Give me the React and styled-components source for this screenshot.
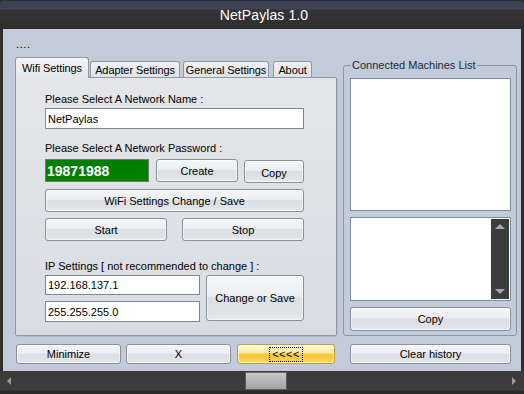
import React from 'react';
import styled, { createGlobalStyle, css } from 'styled-components';

const UI = `"Liberation Sans", Arial, sans-serif`;

const Global = createGlobalStyle`
  html, body { margin: 0; padding: 0; background: #2b2b2b; }
  body { width: 524px; height: 394px; overflow: hidden; }
  *, *::before, *::after { box-sizing: border-box; }
`;

const Window = styled.div`
  width: 524px;
  height: 394px;
  display: flex;
  flex-direction: column;
  background: #2e2e2e;
  font-family: ${UI};
  font-size: 11px;
  color: #000;
`;

const TitleBar = styled.div`
  flex: none;
  height: 29px;
  border-radius: 5px 5px 0 0;
  background: linear-gradient(#23252b 0px, #3c4150 1px, #3f4455 9px, #343434 10px, #2f2f2f 28px, #2a2a2a 29px);
  display: flex;
  align-items: center;
  justify-content: center;
  padding: 1px 0 0 4px;
  color: #fff;
  font-size: 14px;
  letter-spacing: 0.1px;
`;

const Body = styled.div`
  flex: none;
  height: 342px;
  margin: 0 3px;
  background: #c2cbd9;
  display: flex;
  flex-direction: column;
  padding: 0 4px 0 12px;
`;

const Dots = styled.div`
  height: 29px;
  padding: 9px 0 0 1px;
  line-height: 12px;
  letter-spacing: 0.6px;
`;

const MainRow = styled.div`
  display: flex;
  align-items: flex-start;
  gap: 6px;
  height: 278px;
`;

const TabControl = styled.div`
  width: 322px;
  display: flex;
  flex-direction: column;
`;

const TabStrip = styled.div`
  height: 19px;
  display: flex;
  align-items: flex-end;
  position: relative;
  z-index: 1;
`;

const Tab = styled.div`
  width: ${p => p.$w}px;
  margin-left: ${p => p.$gap}px;
  border: 1px solid #8d97a5;
  border-bottom: none;
  border-radius: 3px 3px 0 0;
  display: flex;
  justify-content: center;
  white-space: nowrap;
  letter-spacing: -0.1px;
  ${p => p.$active ? css`
    height: 21px;
    margin-bottom: -1px;
    padding-top: 4px;
    background: linear-gradient(#f3f4f6, #e4e6e9);
  ` : css`
    height: 16px;
    padding-top: 2px;
    background: linear-gradient(#f0f1f3, #dfe2e6);
  `}
`;

const Panel = styled.div`
  height: 259px;
  border: 1px solid #8e98a6;
  border-radius: 0 2px 2px 2px;
  background: linear-gradient(#e4e6e9, #d9dce1);
  padding: 15px 32px 0 29px;
  display: flex;
  flex-direction: column;
  box-shadow: 1px 1px 0 #b4bdca;
`;

const Label = styled.div`
  height: 13px;
  line-height: 13px;
  margin-top: ${p => p.$mt || 0}px;
  white-space: nowrap;
`;

const TextBox = styled.div`
  height: ${p => p.$h || 21}px;
  margin-top: ${p => p.$mt || 0}px;
  width: ${p => (p.$w ? `${p.$w}px` : 'auto')};
  background: #fff;
  border: 1px solid #7d8898;
  padding: 0 2px;
  display: flex;
  align-items: center;
`;

const Row = styled.div`
  display: flex;
  align-items: flex-start;
  gap: ${p => p.$gap || 0}px;
  justify-content: ${p => p.$justify || 'flex-start'};
  margin-top: ${p => p.$mt || 0}px;
`;

const PassBox = styled.div`
  width: 104px;
  height: 23px;
  background: #008000;
  border: 1px solid #707a70;
  color: #fff;
  font-weight: bold;
  font-size: 14px;
  padding: 0 1px;
  display: flex;
  align-items: center;
`;

const Button = styled.div`
  flex: none;
  width: ${p => (p.$w ? `${p.$w}px` : 'auto')};
  height: ${p => p.$h || 23}px;
  margin-top: ${p => p.$mt || 0}px;
  margin-left: ${p => p.$ml || 0}px;
  border: 1px solid #8a9099;
  border-radius: 3px;
  display: flex;
  align-items: center;
  justify-content: center;
  white-space: nowrap;
  padding-top: ${p => p.$pt || 0}px;
  background: linear-gradient(#f5f6f8 0%, #eceef1 45%, #dcdfe4 50%, #dfe2e7 85%, #eaecef 100%);
  box-shadow: inset 0 0 0 1px rgba(255, 255, 255, 0.55);
  ${p => p.$hot && css`
    border-color: #c59b3b;
    background: linear-gradient(#fff7da 0%, #ffe9a3 45%, #f8c634 50%, #f9cf4e 85%, #fde394 100%);
    box-shadow: inset 0 0 0 1px rgba(255, 250, 225, 0.6);
  `}
`;

const Focus = styled.span`
  outline: 1px dotted #000;
  padding: 0 2px;
  line-height: 13px;
  letter-spacing: 0.5px;
`;

const IpFields = styled.div`
  display: flex;
  flex-direction: column;
  gap: 6px;
`;

const GroupBox = styled.fieldset`
  width: 174px;
  height: 278px;
  margin: 0;
  padding: 6px 5px 4px 6px;
  border: 1px solid #8c96a4;
  border-radius: 3px;
  min-width: 0;
`;

const Legend = styled.legend`
  margin-left: 1px;
  padding: 0 1px;
  line-height: 14px;
  color: #1c2838;
`;

const ListBox = styled.div`
  height: ${p => p.$h}px;
  margin-top: ${p => p.$mt || 0}px;
  background: #fff;
  border: 1px solid #7f8b9b;
  display: flex;
  justify-content: flex-end;
`;

const VScroll = styled.div`
  width: 18px;
  margin: 1px;
  background: #3c3c3c;
  display: flex;
  flex-direction: column;
  justify-content: space-between;
  align-items: center;
  padding: 5px 0 5px;
`;

const Arrow = styled.div`
  width: 0;
  height: 0;
  border-left: 5px solid transparent;
  border-right: 5px solid transparent;
  ${p => p.$dir === 'up' && css`border-bottom: 5px solid #a9a9a9;`}
  ${p => p.$dir === 'down' && css`border-top: 5px solid #a9a9a9;`}
`;

const HArrow = styled.div`
  width: 0;
  height: 0;
  border-top: 4px solid transparent;
  border-bottom: 4px solid transparent;
  ${p => p.$dir === 'left' && css`border-right: 4px solid #9a9a9a;`}
  ${p => p.$dir === 'right' && css`border-left: 4px solid #9a9a9a;`}
`;

const BottomRow = styled.div`
  display: flex;
  margin-top: 8px;
  padding-left: 1px;
  height: 20px;
`;

const HScroll = styled.div`
  flex: none;
  height: 23px;
  background: linear-gradient(#3a3a3a 0px, #3d3d3d 19px, #2c2c2c 20px, #2a2a2a 23px);
  display: flex;
  align-items: flex-start;
  padding: 1px 8px 0 7px;
`;

const ArrowSlot = styled.div`
  width: 8px;
  height: 18px;
  display: flex;
  align-items: center;
  justify-content: ${p => p.$end ? 'flex-end' : 'flex-start'};
`;

const Track = styled.div`
  flex: 1;
  display: flex;
`;

const Thumb = styled.div`
  width: 42px;
  height: 18px;
  margin-left: ${p => p.$offset}px;
  background: linear-gradient(#c9c9c9, #b4b4b4 50%, #a3a3a3);
  border: 1px solid #595959;
  border-top-color: #6a6a6a;
`;

const tabs = [
  { label: 'Wifi Settings', w: 74, gap: 0, active: true },
  { label: 'Adapter Settings', w: 90, gap: 1 },
  { label: 'General Settings', w: 86, gap: 3 },
  { label: 'About', w: 39, gap: 4 },
];

export default function App() {
  return (
    <>
      <Global />
      <Window>
        <TitleBar>NetPaylas 1.0</TitleBar>
        <Body>
          <Dots>....</Dots>
          <MainRow>
            <TabControl>
              <TabStrip>
                {tabs.map(t => (
                  <Tab key={t.label} $w={t.w} $gap={t.gap} $active={t.active}>{t.label}</Tab>
                ))}
              </TabStrip>
              <Panel>
                <Label>Please Select A Network Name :</Label>
                <TextBox $mt={2}>NetPaylas</TextBox>
                <Label $mt={13}>Please Select A Network Password :</Label>
                <Row $mt={4}>
                  <PassBox>19871988</PassBox>
                  <Button $w={82} $ml={7}>Create</Button>
                  <Button $w={60} $mt={1} $pt={2} $ml={6}>Copy</Button>
                </Row>
                <Button $mt={6}>WiFi Settings Change / Save</Button>
                <Row $mt={6} $justify="space-between">
                  <Button $w={122}>Start</Button>
                  <Button $w={122}>Stop</Button>
                </Row>
                <Label $mt={19}>IP Settings [ not recommended to change ] :</Label>
                <Row $mt={2} $gap={6}>
                  <IpFields>
                    <TextBox $w={155} $h={20}>192.168.137.1</TextBox>
                    <TextBox $w={155} $h={21}>255.255.255.0</TextBox>
                  </IpFields>
                  <Button $w={98} $h={46}>Change or Save</Button>
                </Row>
              </Panel>
            </TabControl>
            <GroupBox>
              <Legend>Connected Machines List</Legend>
              <ListBox $h={133} />
              <ListBox $h={84} $mt={6}>
                <VScroll>
                  <Arrow $dir="up" />
                  <Arrow $dir="down" />
                </VScroll>
              </ListBox>
              <Button $h={24} $mt={6}>Copy</Button>
            </GroupBox>
          </MainRow>
          <BottomRow>
            <Button $w={105} $h={20}>Minimize</Button>
            <Button $w={105} $h={20} $ml={5}>X</Button>
            <Button $w={98} $h={20} $ml={6} $hot><Focus>&lt;&lt;&lt;&lt;</Focus></Button>
            <Button $w={161} $h={20} $ml={15}>Clear history</Button>
          </BottomRow>
        </Body>
        <HScroll>
          <ArrowSlot><HArrow $dir="left" /></ArrowSlot>
          <Track><Thumb $offset={230} /></Track>
          <ArrowSlot $end><HArrow $dir="right" /></ArrowSlot>
        </HScroll>
      </Window>
    </>
  );
}
